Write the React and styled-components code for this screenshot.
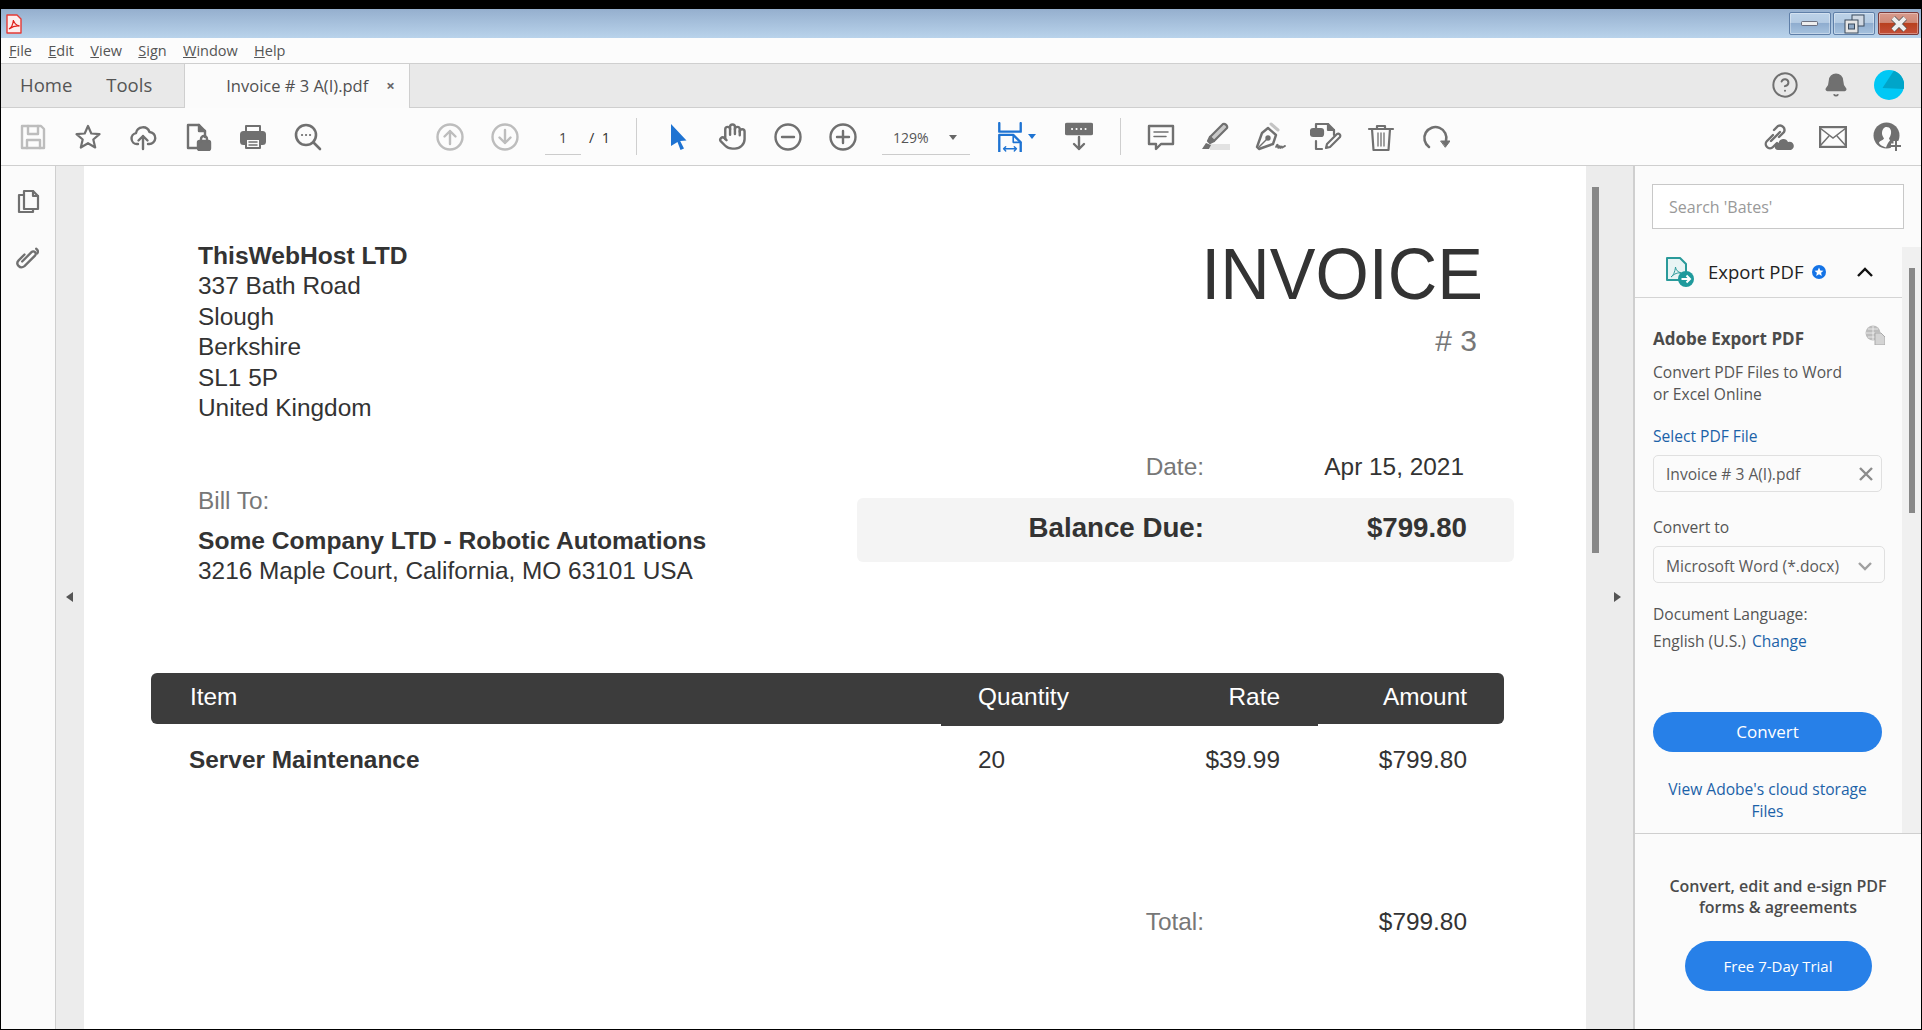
import styled, { createGlobalStyle } from "styled-components";
import { Hand, CircleHelp, Bell } from "lucide-react";

const Global = createGlobalStyle`
  html, body { margin: 0; padding: 0; height: 100%; background: #000; }
  * { box-sizing: border-box; }
`;

const Frame = styled.div`
  height: 1030px;
  width: 1922px;
  overflow: hidden;
  padding: 9px 1px 1px 1px;
  background: #000;
  display: flex;
  flex-direction: column;
  font-family: "Open Sans", "Noto Sans", sans-serif;
`;

/* window chrome */
const TitleBar = styled.div`
  height: 29px;
  flex: none;
  display: flex;
  align-items: center;
  justify-content: space-between;
  padding: 0 2px 0 5px;
  background: linear-gradient(#95afce, #b9d3eb);
`;
const WinButtons = styled.div`
  display: flex;
  gap: 2px;
  align-self: flex-start;
  margin-top: 3px;
`;
const WinButton = styled.div`
  width: ${(p) => (p.$close ? "41px" : "42px")};
  height: 23px;
  margin-left: ${(p) => (p.$close ? "1px" : "0")};
  border-radius: 2px;
  border: 1px solid ${(p) => (p.$close ? "#7a3a3a" : "#5f7fa8")};
  box-shadow: inset 0 0 0 1px rgba(255, 255, 255, 0.35);
  background: ${(p) =>
    p.$close
      ? "linear-gradient(#d89a8c 0%, #d08a78 45%, #b8401f 50%, #c4503a 100%)"
      : "linear-gradient(#bcd2e8 0%, #b4cbe3 45%, #8fadcf 50%, #a6c2de 100%)"};
  display: flex;
  align-items: center;
  justify-content: center;
`;
const MenuBar = styled.div`
  height: 25px;
  flex: none;
  background: #fcfcfc;
  display: flex;
  align-items: center;
  padding-left: 8px;
  gap: 16.3px;
  font-size: 14.5px;
  color: #555;
`;
const MenuItem = styled.span`
  &::first-letter {
    text-decoration: underline;
  }
  display: inline-block;
`;
const TabBar = styled.div`
  height: 45px;
  flex: none;
  background: #e9e9e9;
  border-top: 1px solid #cfcfcf;
  border-bottom: 1px solid #cfcfcf;
  display: flex;
  align-items: stretch;
`;
const NavTab = styled.div`
  display: flex;
  align-items: center;
  padding-bottom: 2px;
  font-size: 18.5px;
  color: #555;
  margin-left: ${(p) => p.$left}px;
`;
const DocTab = styled.div`
  margin-left: 32px;
  margin-bottom: -1px;
  width: 226px;
  background: #fbfbfb;
  border-left: 1px solid #cfcfcf;
  border-right: 1px solid #cfcfcf;
  display: flex;
  align-items: center;
  padding-left: 41px;
  padding-bottom: 2px;
  font-size: 16.5px;
  color: #505050;
`;
const TabClose = styled.span`
  margin-left: 18px;
  font-size: 15px;
  font-weight: 700;
  color: #666;
`;
const TabRight = styled.div`
  margin-left: auto;
  display: flex;
  align-items: center;
  padding: 0 17px 2px 0;
  gap: 24px;
  color: #707070;
`;
const AvatarSlot = styled.span`
  display: flex;
  margin-left: 1px;
`;

/* toolbar */
const Toolbar = styled.div`
  height: 58px;
  flex: none;
  background: #fcfcfc;
  border-bottom: 1px solid #cfcfcf;
  display: flex;
  align-items: center;
  padding-left: 4px;
`;
const Tool = styled.div`
  width: ${(p) => p.$w || 55}px;
  margin-left: ${(p) => p.$ml || 0}px;
  flex: none;
  display: flex;
  justify-content: center;
  align-items: center;
  color: ${(p) => p.$color || "#707070"};
`;
const Sep = styled.div`
  width: 1px;
  height: 37px;
  flex: none;
  background: #cfcfcf;
  margin-left: ${(p) => p.$ml}px;
`;
const PageInput = styled.div`
  width: 36px;
  height: 36px;
  flex: none;
  margin-left: ${(p) => p.$ml || 0}px;
  border-bottom: 1px solid #ccc;
  display: flex;
  align-items: center;
  justify-content: center;
  font-size: 14px;
  color: #444;
  padding-top: 2px;
`;
const PageTotal = styled.div`
  margin-left: 8px;
  width: 21px;
  flex: none;
  display: flex;
  justify-content: space-between;
  font-size: 14.5px;
  color: #333;
  padding-top: 2px;
`;
const ZoomSelect = styled(PageInput)`
  width: 88px;
  justify-content: flex-start;
  padding-left: 11px;
  color: #555;
  gap: 20px;
`;
const Caret = styled.span`
  width: 0;
  height: 0;
  border-left: 4px solid transparent;
  border-right: 4px solid transparent;
  border-top: 5px solid ${(p) => p.$color || "#666"};
`;
const ToolRight = styled.div`
  margin-left: auto;
  display: flex;
  padding-right: 6px;
`;

/* main */
const Main = styled.div`
  flex: 1;
  min-height: 0;
  display: flex;
`;
const LeftRail = styled.div`
  width: 55px;
  flex: none;
  background: #fbfbfb;
  border-right: 1px solid #cfcfcf;
  display: flex;
  flex-direction: column;
  align-items: center;
  padding-top: 21px;
  gap: 29px;
  color: #707070;
`;
const Gutter = styled.div`
  background: #ececec;
  flex: none;
  display: flex;
  align-items: center;
  padding-bottom: 2px;
`;
const LeftGutter = styled(Gutter)`
  width: 28px;
  padding-left: 10px;
`;
const RightGutter = styled(Gutter)`
  width: 47px;
  position: relative;
  justify-content: flex-end;
  padding-right: 12px;
`;
const ScrollThumb = styled.div`
  position: absolute;
  left: 6px;
  top: 21px;
  width: 7px;
  height: 366px;
  background: #888;
`;
const ArrowLeft = styled.span`
  border-top: 5px solid transparent;
  border-bottom: 5px solid transparent;
  border-right: 7px solid #555;
`;
const ArrowRight = styled.span`
  border-top: 5px solid transparent;
  border-bottom: 5px solid transparent;
  border-left: 7px solid #555;
`;

/* the pdf sheet */
const Sheet = styled.div`
  flex: none;
  width: 1502px;
  background: #fff;
  padding-top: 75px;
  font-family: "Liberation Sans", Arial, sans-serif;
  font-size: 24.4px;
  line-height: 30px;
  color: #333;
`;
const SheetTop = styled.div`
  display: flex;
  justify-content: space-between;
  align-items: flex-start;
`;
const FromCol = styled.div`
  padding-left: 114px;
`;
const AddressLine = styled.div`
  line-height: 30.4px;
  font-weight: ${(p) => (p.$bold ? 700 : 400)};
  font-size: ${(p) => (p.$bold ? "24.6px" : "24.4px")};
`;
const BillLabel = styled.div`
  margin-top: 63px;
  color: #777;
`;
const BillName = styled.div`
  margin-top: 10px;
  font-size: 24.6px;
  font-weight: 700;
`;
const BillAddress = styled.div`
  line-height: 29px;
`;
const InfoCol = styled.div`
  width: 657px;
  margin-top: -6px;
  margin-right: 72px;
`;
const BigTitle = styled.div`
  text-align: right;
  padding-right: 31px;
  font-size: 68.5px;
  line-height: 80px;
  color: #333;
  transform: scaleY(1.06);
`;
const InvoiceNo = styled.div`
  text-align: right;
  padding-right: 37px;
  margin-top: 8px;
  font-size: 30px;
  line-height: 36px;
  color: #777;
`;
const InfoRow = styled.div`
  display: grid;
  grid-template-columns: 347px 1fr;
  margin-top: 93px;
  padding-right: ${(p) => p.$pr || 50}px;
`;
const Label = styled.div`
  text-align: right;
  color: #777;
`;
const Value = styled.div`
  text-align: right;
`;
const BalanceBox = styled.div`
  margin-top: 16px;
  height: 64px;
  border-radius: 6px;
  background: #f4f4f4;
  display: grid;
  grid-template-columns: 347px 1fr;
  align-items: center;
  padding: 0 47px 5px 0;
  font-size: 27.7px;
  font-weight: 700;
`;
const ItemsGrid = styled.div`
  display: grid;
  grid-template-columns: 790px 209px 168px 186px;
  margin-left: 67px;
  width: 1353px;
`;
const ItemsHead = styled(ItemsGrid)`
  margin-top: 88px;
  height: 51px;
  align-items: center;
  background: #3c3c3c;
  border-radius: 6px;
  color: #fff;
  padding-bottom: 4px;
  position: relative;
  &::after {
    content: "";
    position: absolute;
    left: 790px;
    width: 377px;
    bottom: -2px;
    height: 2px;
    background: #3c3c3c;
  }
`;
const ItemsRow = styled(ItemsGrid)`
  margin-top: 21px;
`;
const Cell = styled.div`
  text-align: ${(p) => (p.$right ? "right" : "left")};
  padding: ${(p) => p.$pad || "0"};
  font-weight: ${(p) => (p.$bold ? 700 : 400)};
`;
const TotalRow = styled.div`
  display: grid;
  grid-template-columns: 347px 263px;
  margin: 132px 0 0 773px;
`;

/* right pane */
const Pane = styled.div`
  flex: 1;
  min-width: 0;
  background: #fbfbfb;
  border-left: 2px solid #cfcfcf;
  display: flex;
  flex-direction: column;
`;
const SearchWrap = styled.div`
  height: 81px;
  flex: none;
  padding: 18px 0 0 17px;
`;
const SearchBox = styled.div`
  width: 252px;
  height: 45px;
  background: #fff;
  border: 1px solid #c8c8c8;
  display: flex;
  align-items: center;
  padding-left: 16px;
  font-size: 16px;
  color: #999;
`;
const ToolsScroll = styled.div`
  height: 587px;
  flex: none;
  display: flex;
  border-bottom: 1px solid #cfcfcf;
`;
const ToolsBody = styled.div`
  width: 267px;
  flex: none;
  font-size: 15.6px;
  line-height: 22px;
  color: #555;
`;
const ScrollTrack = styled.div`
  flex: 1;
  background: #f0f0f0;
  padding: 21px 0 0 7px;
`;
const TrackThumb = styled.div`
  width: 6px;
  height: 245px;
  background: #888;
`;
const ExportHead = styled.div`
  height: 51px;
  border-bottom: 1px solid #d4d4d4;
  display: flex;
  align-items: center;
  padding-left: 30px;
`;
const ExportTitle = styled.span`
  margin-left: 13px;
  font-size: 18.5px;
  color: #222;
`;
const Badge = styled.span`
  margin-left: 9px;
  display: flex;
`;
const Chevron = styled.span`
  margin-left: 31px;
  display: flex;
`;
const ExportBody = styled.div`
  padding: 30px 0 0 18px;
  position: relative;
`;
const Heading = styled.div`
  font-size: 17px;
  font-weight: 700;
  color: #4b4b4b;
`;
const GlobeSlot = styled.span`
  position: absolute;
  right: 17px;
  top: 27px;
  display: flex;
`;
const Text = styled.div`
  margin-top: ${(p) => p.$mt || 0}px;
`;
const LinkText = styled(Text)`
  color: #1b62a8;
`;
const InlineLink = styled.span`
  margin-left: 6px;
  color: #1b62a8;
`;
const FieldBox = styled.div`
  margin-top: ${(p) => p.$mt}px;
  width: ${(p) => p.$w}px;
  height: ${(p) => p.$h || 37}px;
  background: #fbfbfb;
  border: 1px solid #e0e0e0;
  border-radius: 5px;
  display: flex;
  align-items: center;
  justify-content: space-between;
  padding: ${(p) => p.$pad || "0 7px 0 12px"};
  color: #5a5a5a;
`;
const PrimaryButton = styled.div`
  margin-top: ${(p) => p.$mt || 0}px;
  width: ${(p) => p.$w}px;
  height: ${(p) => p.$h}px;
  border-radius: ${(p) => p.$h / 2}px;
  background: #2780e8;
  color: #fff;
  font-weight: 400;
  display: flex;
  align-items: center;
  justify-content: center;
  font-size: ${(p) => p.$fs}px;
`;
const CenterLink = styled(LinkText)`
  text-align: center;
  width: 229px;
`;
const Promo = styled.div`
  flex: 1;
  display: flex;
  flex-direction: column;
  align-items: center;
  padding-top: 42px;
  font-size: 16px;
  font-weight: 600;
  line-height: 21px;
  color: #4b4b4b;
  text-align: center;
`;

const Ico = ({ size = 28, vb = 28, sw = 2, children }) => (
  <svg width={size} height={size} viewBox={`0 0 ${vb} ${vb}`} fill="none" stroke="currentColor" strokeWidth={sw} strokeLinejoin="round" strokeLinecap="round">
    {children}
  </svg>
);

const PdfLogo = () => (
  <svg width="16" height="20" viewBox="0 0 16 20" fill="none">
    <path d="M1 1h10l4 4v14H1z" fill="#fdeeee" stroke="#e53a35" strokeWidth="1.4" strokeLinejoin="round" />
    <path d="M3 15c2-1 4-5 4.500-9 .5 3 2 5 6 6-4-.5-7 .5-10.500 3z" stroke="#e0201b" strokeWidth="1.3" />
  </svg>
);

const App = () => (
  <Frame>
    <Global />
    <TitleBar>
      <PdfLogo />
      <WinButtons>
        <WinButton>
          <svg width="18" height="6"><rect x="0.500" y="0.500" width="16" height="4" rx="1" fill="#eee" stroke="#445" strokeWidth="0.7" /></svg>
        </WinButton>
        <WinButton>
          <svg width="22" height="20" viewBox="0 0 22 20" fill="none" stroke="#3b4a5c" strokeWidth="1">
            <rect x="9" y="1" width="12" height="11" fill="#cfd8e3" />
            <rect x="2" y="6" width="13" height="13" fill="#e6e6e6" />
            <rect x="5.500" y="10" width="6" height="5" fill="#8fa8c4" />
          </svg>
        </WinButton>
        <WinButton $close>
          <svg width="22" height="16" viewBox="0 0 22 16">
            <path d="M5 2l12 12M17 2 5 14" stroke="#555" strokeWidth="5.500" />
            <path d="M5 2l12 12M17 2 5 14" stroke="#eee" strokeWidth="4" />
          </svg>
        </WinButton>
      </WinButtons>
    </TitleBar>

    <MenuBar>
      <MenuItem>File</MenuItem>
      <MenuItem>Edit</MenuItem>
      <MenuItem>View</MenuItem>
      <MenuItem>Sign</MenuItem>
      <MenuItem>Window</MenuItem>
      <MenuItem>Help</MenuItem>
    </MenuBar>

    <TabBar>
      <NavTab $left={19}>Home</NavTab>
      <NavTab $left={34}>Tools</NavTab>
      <DocTab>
        Invoice # 3 A(I).pdf
        <TabClose>×</TabClose>
      </DocTab>
      <TabRight>
        <CircleHelp size={28} strokeWidth={1.7} />
        <Bell size={26} fill="currentColor" strokeWidth={1.4} />
        <AvatarSlot>
          <svg width="30" height="30" viewBox="0 0 30 30">
            <circle cx="15" cy="15" r="15" fill="#00c8f5" />
            <path d="M19.800.8 8.500 18l21.200 1A15 15 0 0 0 19.800.8z" fill="#00a5c9" />
          </svg>
        </AvatarSlot>
      </TabRight>
    </TabBar>

    <Toolbar>
      <Tool $color="#bdbdbd">
        <Ico sw={2.400}>
          <path d="M3 3h19l3 3v19H3z" />
          <path d="M9 3v8h10V3M8 25v-8h13v8" />
        </Ico>
      </Tool>
      <Tool>
        <Ico sw={2.200}><path d="M14 3l3.300 7.500 8.200.7-6.200 5.300 1.900 8L14 20.200l-7.200 4.300 1.900-8-6.200-5.300 8.200-.7z" /></Ico>
      </Tool>
      <Tool>
        <Ico sw={2.400}>
          <path d="M9 21H8a5.500 5.500 0 0 1-1-10.900A7 7 0 0 1 20.500 9 6 6 0 0 1 20 21h-1" />
          <path d="M14 26V13M9.500 17.500 14 13l4.500 4.500" />
        </Ico>
      </Tool>
      <Tool>
        <Ico sw={2.400}>
          <path d="M13 25H4V2h11l6 6v6" />
          <path d="M15 2v6h6" fill="currentColor" />
          <rect x="14" y="18" width="12" height="9" rx="1.500" fill="currentColor" />
          <path d="M17 18v-2a3 3 0 0 1 6 0v2" />
        </Ico>
      </Tool>
      <Tool>
        <Ico>
          <path d="M7 9V3h14v6" />
          <rect x="2" y="9" width="24" height="12" rx="2.500" fill="currentColor" />
          <rect x="7" y="16" width="14" height="9" fill="#fcfcfc" />
          <path d="M10 19h8M10 22h8" strokeWidth="1.500" />
        </Ico>
      </Tool>
      <Tool>
        <Ico sw={2.600}>
          <circle cx="12" cy="12" r="10" />
          <path d="M19.500 19.500l6.500 6.500" />
          <path d="M8 12h.1M12 12h.1M16 12h.1" strokeWidth="2.200" />
        </Ico>
      </Tool>

      <Tool $ml={87} $color="#bdbdbd">
        <Ico sw={2.400}>
          <circle cx="14" cy="14" r="12.500" />
          <path d="M14 21V8M8.500 13.500 14 8l5.500 5.500" />
        </Ico>
      </Tool>
      <Tool $color="#bdbdbd">
        <Ico sw={2.400}>
          <circle cx="14" cy="14" r="12.500" />
          <path d="M14 7v13M8.500 14.500 14 20l5.500-5.500" />
        </Ico>
      </Tool>
      <PageInput $ml={13}>1</PageInput>
      <PageTotal>
        <span>/</span>
        <span>1</span>
      </PageTotal>
      <Sep $ml={26} />

      <Tool $ml={13} $color="#1e73d2">
        <svg width="28" height="28" viewBox="0 0 28 28" fill="currentColor">
          <path d="M7 1l15.500 16.500-6.300.5 3.800 7.500-3.500 1.500-3-8L7 23z" />
        </svg>
      </Tool>
      <Tool>
        <Hand size={29} strokeWidth={2} />
      </Tool>
      <Tool>
        <Ico sw={2.400}>
          <circle cx="14" cy="14" r="12.500" />
          <path d="M8 14h12" />
        </Ico>
      </Tool>
      <Tool>
        <Ico sw={2.400}>
          <circle cx="14" cy="14" r="12.500" />
          <path d="M8 14h12M14 8v12" />
        </Ico>
      </Tool>
      <ZoomSelect $ml={12}>
        129%
        <Caret />
      </ZoomSelect>

      <Tool $ml={21} $w={37} $color="#1e73d2">
        <Ico size={30} sw={2.200}>
          <path d="M4 1v8h20V1" />
          <path d="M4 28V12h13l7 7v9" />
          <path d="M17 12v7h7" strokeWidth="1.500" />
          <path d="M8 25h12M10 23l-2 2 2 2M18 23l2 2-2 2" strokeWidth="1.300" />
        </Ico>
      </Tool>
      <Caret $color="#1e73d2" />
      <Tool $ml={17} $w={52}>
        <svg width="28" height="30" viewBox="0 0 28 30" fill="none" stroke="currentColor" strokeWidth="2.400" strokeLinecap="round" strokeLinejoin="round">
          <rect x="1" y="2" width="26" height="10" rx="1" fill="currentColor" />
          <path d="M7 7h.1M11.500 7h.1M16 7h.1M20.500 7h.1" stroke="#fff" strokeWidth="2" />
          <path d="M14 15v12M9 22l5 5 5-5" />
        </svg>
      </Tool>
      <Sep $ml={15} />

      <Tool $ml={12}>
        <Ico sw={2.400}>
          <path d="M2 3h24v18H14l-5 5v-5H2z" />
          <path d="M7 9h14M7 13.500h12" strokeWidth="1.500" />
        </Ico>
      </Tool>
      <Tool>
        <svg width="30" height="30" viewBox="0 0 30 30" fill="none" stroke="currentColor" strokeWidth="2.200" strokeLinejoin="round">
          <rect x="9" y="22" width="20" height="6" fill="#e2e2e2" stroke="none" />
          <path d="M9 15 22 2c2-1 5 2 4 4L13 19z" fill="#c9c9c9" />
          <path d="M9 15l-2 4 2 2 4-2z" fill="currentColor" />
          <path d="M5 21l-4 6h7l2-4z" fill="currentColor" stroke="none" />
        </svg>
      </Tool>
      <Tool>
        <svg width="32" height="30" viewBox="0 0 32 30" fill="none" stroke="currentColor" strokeWidth="2.400" strokeLinejoin="round" strokeLinecap="round">
          <path d="M16 2l7 6" strokeWidth="3" stroke="#c4c4c4" />
          <path d="M13 6l8 7-3 9-14 5-2-2 5-14z" />
          <path d="M4 25l8-8" strokeWidth="1.500" />
          <circle cx="13" cy="16" r="1.500" fill="currentColor" />
          <path d="M21 25c1-3 2-3 2 0s2-3 2 0 2-2 2 0 2-1 3-1" strokeWidth="1.800" />
        </svg>
      </Tool>
      <Tool>
        <svg width="32" height="30" viewBox="0 0 32 30" fill="none" stroke="currentColor" strokeWidth="2.200" strokeLinejoin="round" strokeLinecap="round">
          <path d="M6 7V2h12l6 6v5" />
          <path d="M18 2v6h6" fill="currentColor" />
          <rect x="1" y="7" width="12" height="7" rx="2" fill="currentColor" />
          <path d="M6 19v8h6" />
          <path d="M16 26l1-4 10-10c2-1 4 1 3 3L20 25z" />
        </svg>
      </Tool>
      <Tool>
        <Ico sw={2.200}>
          <path d="M2 6h24M10 6V3h8v3" />
          <path d="M5 6l1.500 21h15L23 6" />
          <path d="M11 10v13M14 10v13M17 10v13" strokeWidth="1.300" />
        </Ico>
      </Tool>
      <Tool>
        <Ico sw={2.600}>
          <path d="M7 24a11 11 0 1 1 17-6" />
          <path d="M19 18h9l-4.500 6z" fill="currentColor" strokeWidth="1" />
        </Ico>
      </Tool>

      <ToolRight>
        <Tool>
          <svg width="32" height="30" viewBox="0 0 32 30" fill="none" stroke="currentColor" strokeWidth="2.400" strokeLinecap="round">
            <path d="M11 13l-6 6a4 4 0 0 0 6 6l4-4" />
            <path d="M9 19l9-9" />
            <path d="M12 8l4-4a4.500 4.500 0 0 1 6 6l-5 5" />
            <path d="M16 28a3.500 3.500 0 0 1 .5-7 5 5 0 0 1 9.500-1 4 4 0 0 1 3 8z" fill="currentColor" stroke="none" />
          </svg>
        </Tool>
        <Tool>
          <svg width="28" height="22" viewBox="0 0 28 22" fill="none" stroke="currentColor" strokeWidth="2.400">
            <rect x="1" y="1" width="26" height="20" />
            <path d="M1 2l13 10L27 2M1 20l9-10M27 20l-9-10" strokeWidth="1.500" />
          </svg>
        </Tool>
        <Tool>
          <svg width="30" height="30" viewBox="0 0 30 30" fill="none">
            <circle cx="13.500" cy="13.500" r="13" fill="#707070" />
            <path d="M13.500 5c4 0 5 3.500 4.500 6.500-.3 2-1.500 4-2 5l1 2c-2 2-3 4-4 7-3-1-7-3-7-5 1-2 4-2 5-4-1-2-2-3-2-5 0-4 2-6.500 4.500-6.500z" fill="#fcfcfc" />
            <path d="M18 24h10M23 19v10" stroke="#fcfcfc" strokeWidth="5" />
            <path d="M18 24h10M23 19v10" stroke="#707070" strokeWidth="2" />
          </svg>
        </Tool>
      </ToolRight>
    </Toolbar>

    <Main>
      <LeftRail>
        <Ico size={28} sw={2.200}>
          <path d="M10 4h9l5 5v13H10z" />
          <path d="M19 4v5h5" />
          <path d="M10 8H5v17h14v-3" />
        </Ico>
        <svg width="28" height="28" viewBox="0 0 24 24" fill="none" stroke="currentColor" strokeWidth="2" strokeLinecap="round">
          <path d="M9 9 4 14c-3 3 1 8 5 5l9-9c2-2-1-5-3-3l-8 8" />
          <path d="M19 4c1.500 1 2 2.500 1 4" />
        </svg>
      </LeftRail>
      <LeftGutter>
        <ArrowLeft />
      </LeftGutter>

      <Sheet>
        <SheetTop>
          <FromCol>
            <AddressLine $bold>ThisWebHost LTD</AddressLine>
            <AddressLine>337 Bath Road</AddressLine>
            <AddressLine>Slough</AddressLine>
            <AddressLine>Berkshire</AddressLine>
            <AddressLine>SL1 5P</AddressLine>
            <AddressLine>United Kingdom</AddressLine>
            <BillLabel>Bill To:</BillLabel>
            <BillName>Some Company LTD - Robotic Automations</BillName>
            <BillAddress>3216 Maple Court, California, MO 63101 USA</BillAddress>
          </FromCol>
          <InfoCol>
            <BigTitle>INVOICE</BigTitle>
            <InvoiceNo># 3</InvoiceNo>
            <InfoRow>
              <Label>Date:</Label>
              <Value>Apr 15, 2021</Value>
            </InfoRow>
            <BalanceBox>
              <Value>Balance Due:</Value>
              <Value>$799.80</Value>
            </BalanceBox>
          </InfoCol>
        </SheetTop>

        <ItemsHead>
          <Cell $pad="0 0 0 39px">Item</Cell>
          <Cell $pad="0 0 0 37px">Quantity</Cell>
          <Cell $right $pad="0 38px 0 0">Rate</Cell>
          <Cell $right $pad="0 37px 0 0">Amount</Cell>
        </ItemsHead>
        <ItemsRow>
          <Cell $bold $pad="0 0 0 38px">Server Maintenance</Cell>
          <Cell $pad="0 0 0 37px">20</Cell>
          <Cell $right $pad="0 38px 0 0">$39.99</Cell>
          <Cell $right $pad="0 37px 0 0">$799.80</Cell>
        </ItemsRow>
        <TotalRow>
          <Label>Total:</Label>
          <Value>$799.80</Value>
        </TotalRow>
      </Sheet>

      <RightGutter>
        <ScrollThumb />
        <ArrowRight />
      </RightGutter>

      <Pane>
        <SearchWrap>
          <SearchBox>Search 'Bates'</SearchBox>
        </SearchWrap>
        <ToolsScroll>
          <ToolsBody>
            <ExportHead>
              <svg width="30" height="30" viewBox="0 0 28 30" fill="none">
                <path d="M1 1h13l6 6v16H1z" fill="#e8f4f4" stroke="#2a9a9a" strokeWidth="2" strokeLinejoin="round" />
                <path d="M5 20c2-1 4-5 4.500-10 .5 3 2 5 6 6-4-.5-7 .5-10.500 4z" stroke="#2a9a9a" strokeWidth="1" />
                <circle cx="20" cy="22" r="8" fill="#1f9a9c" />
                <path d="M15.500 22h8M20.500 18.500 24 22l-3.500 3.500" stroke="#fff" strokeWidth="2" />
              </svg>
              <ExportTitle>Export PDF</ExportTitle>
              <Badge>
                <svg width="14" height="14" viewBox="0 0 14 14">
                  <circle cx="7" cy="7" r="7" fill="#1473e6" />
                  <path d="M7 2.500l1.300 2.900 3.200.3-2.400 2.100.7 3.100L7 9.300l-2.800 1.600.7-3.100-2.400-2.100 3.200-.3z" fill="#fff" />
                </svg>
              </Badge>
              <Chevron>
                <svg width="16" height="10" viewBox="0 0 16 10" fill="none" stroke="#111" strokeWidth="2.400">
                  <path d="M1 9l7-7 7 7" />
                </svg>
              </Chevron>
            </ExportHead>
            <ExportBody>
              <Heading>Adobe Export PDF</Heading>
              <GlobeSlot>
                <svg width="20" height="20" viewBox="0 0 20 20" fill="#bdbdbd">
                  <circle cx="8" cy="8" r="7.500" />
                  <path d="M1 8h14M8 1v14M3 4h10M3 12h10" stroke="#fbfbfb" strokeWidth="0.700" />
                  <path d="M10 8h6l4 4v8H10z" fill="#d4d4d4" stroke="#aaa" />
                </svg>
              </GlobeSlot>
              <Text $mt={11}>Convert PDF Files to Word</Text>
              <Text>or Excel Online</Text>
              <LinkText $mt={20}>Select PDF File</LinkText>
              <FieldBox $mt={8} $w={229}>
                Invoice # 3 A(I).pdf
                <svg width="16" height="16" viewBox="0 0 16 16" stroke="#8c8c8c" strokeWidth="2.400">
                  <path d="M2 2l12 12M14 2 2 14" />
                </svg>
              </FieldBox>
              <Text $mt={24}>Convert to</Text>
              <FieldBox $mt={8} $w={232} $h={37} $pad="3px 12px 0 12px">
                Microsoft Word (*.docx)
                <svg width="14" height="9" viewBox="0 0 14 9" fill="none" stroke="#a0a0a0" strokeWidth="2.400">
                  <path d="M1 1l6 6 6-6" />
                </svg>
              </FieldBox>
              <Text $mt={20}>Document Language:</Text>
              <Text $mt={5}>
                English (U.S.)
                <InlineLink>Change</InlineLink>
              </Text>
              <PrimaryButton $mt={60} $w={229} $h={40} $fs={17}>Convert</PrimaryButton>
              <CenterLink $mt={26}>View Adobe's cloud storage<br />Files</CenterLink>
            </ExportBody>
          </ToolsBody>
          <ScrollTrack>
            <TrackThumb />
          </ScrollTrack>
        </ToolsScroll>
        <Promo>
          <div>Convert, edit and e-sign PDF</div>
          <div>forms &amp; agreements</div>
          <PrimaryButton $mt={23} $w={187} $h={50} $fs={15}>Free 7-Day Trial</PrimaryButton>
        </Promo>
      </Pane>
    </Main>
  </Frame>
);

export default App;
